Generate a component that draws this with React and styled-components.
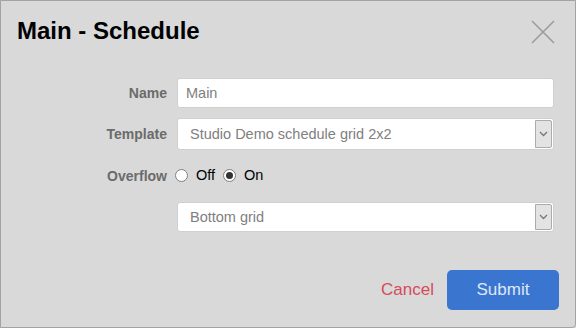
import styled, { createGlobalStyle } from "styled-components";

const Global = createGlobalStyle`
  html, body { margin: 0; padding: 0; background: #d9d9d9; }
  body { font-family: "Liberation Sans", Arial, sans-serif; }
  * { box-sizing: border-box; }
`

const Modal = styled.div`
  width: 576px;
  height: 328px;
  background: #d9d9d9;
  border: 1px solid #a3a3a3;
  border-radius: 0 0 4px 0;
  display: flex;
  flex-direction: column;
`

const Header = styled.header`
  display: flex;
  justify-content: space-between;
  align-items: flex-start;
  padding: 16px 20px 0 16px;
`

const Title = styled.h2`
  margin: 0;
  font-size: 24px;
  font-weight: bold;
  color: #000;
  line-height: 28px;
`

const Close = styled.button`
  border: none;
  background: none;
  padding: 0;
  margin-top: 3px;
  width: 24px;
  height: 24px;
  cursor: pointer;
`

const Form = styled.div`
  display: grid;
  grid-template-columns: 166px 1fr;
  column-gap: 10px;
  row-gap: 10px;
  padding: 33px 21px 0 0;
  align-items: center;
`

const Label = styled.label`
  text-align: right;
  font-size: 14px;
  font-weight: bold;
  color: #6b6b6b;
`

const Input = styled.input`
  height: 30px;
  width: 100%;
  border: 1px solid #d0d0d0;
  border-radius: 3px;
  background: #fff;
  padding: 0 8px;
  font-family: inherit;
  font-size: 14.5px;
  color: #808080;
  outline: none;
`

const Select = styled.div`
  grid-column: ${(p) => (p.$alone ? "2" : "auto")};
  height: ${(p) => p.$h || 30}px;
  display: flex;
  align-items: stretch;
  background: #fff;
  border: 1px solid #d0d0d0;
  border-radius: 3px;
  padding: 1px;
`

const SelectText = styled.span`
  flex: 1;
  display: flex;
  align-items: center;
  padding-left: 11px;
  font-size: 14.5px;
  color: #808080;
`

const Arrow = styled.span`
  width: 17px;
  display: flex;
  align-items: center;
  justify-content: center;
  background: #e3e3e3;
  border: 1px solid #ababab;
  border-radius: 0 2px 2px 0;
`

const RadioRow = styled.div`
  height: 30px;
  margin-bottom: 2px;
  display: flex;
  align-items: center;
  margin-left: -2px;
  font-size: 14.5px;
  color: #000;
`

const RadioOption = styled.span`
  display: flex;
  align-items: center;
  gap: 8px;
  margin-right: 8px;
`

const Radio = styled.span`
  width: 13px;
  height: 13px;
  border-radius: 50%;
  border: 1px solid #808080;
  background: #fff;
  display: flex;
  align-items: center;
  justify-content: center;
  &::after {
    content: "";
    width: 7px;
    height: 7px;
    border-radius: 50%;
    background: ${(p) => (p.$checked ? "#333" : "transparent")};
  }
`

const Footer = styled.footer`
  margin-top: auto;
  display: flex;
  justify-content: flex-end;
  align-items: center;
  gap: 13px;
  padding: 0 16px 17px 0;
`

const Cancel = styled.button`
  border: none;
  background: none;
  padding: 0;
  font-family: inherit;
  font-size: 17px;
  color: #d64b5c;
  cursor: pointer;
`

const Submit = styled.button`
  width: 112px;
  height: 40px;
  border: none;
  border-radius: 5px;
  background: #3a76d0;
  color: #dfe7f5;
  font-family: inherit;
  font-size: 17px;
  cursor: pointer;
`

function Chevron() {
  return (
    <svg width="9" height="6" viewBox="0 0 9 6">
      <path d="M1 1 L4.5 4.5 L8 1" fill="none" stroke="#777" strokeWidth="1.3" />
    </svg>
  )
}

export default function App() {
  return (
    <>
      <Global />
      <Modal>
        <Header>
          <Title>Main - Schedule</Title>
          <Close>
            <svg width="24" height="24" viewBox="0 0 24 24">
              <path d="M1 1 L23 23 M23 1 L1 23" stroke="#9a9a9a" strokeWidth="1.5" />
            </svg>
          </Close>
        </Header>

        <Form>
          <Label>Name</Label>
          <Input defaultValue="Main" />

          <Label>Template</Label>
          <Select $h={32}>
            <SelectText>Studio Demo schedule grid 2x2</SelectText>
            <Arrow><Chevron /></Arrow>
          </Select>

          <Label>Overflow</Label>
          <RadioRow>
            <RadioOption><Radio />Off</RadioOption>
            <RadioOption><Radio $checked />On</RadioOption>
          </RadioRow>

          <Select $alone>
            <SelectText>Bottom grid</SelectText>
            <Arrow><Chevron /></Arrow>
          </Select>
        </Form>

        <Footer>
          <Cancel>Cancel</Cancel>
          <Submit>Submit</Submit>
        </Footer>
      </Modal>
    </>
  )
}
